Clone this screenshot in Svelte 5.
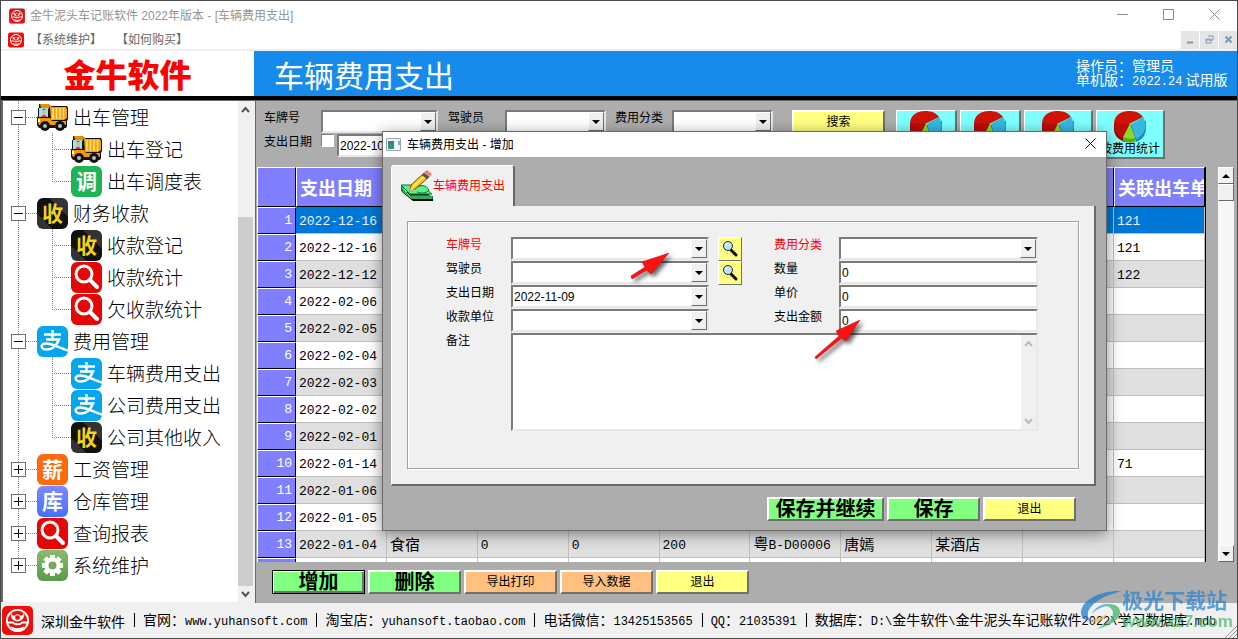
<script>
  const tree = [
    { label: '出车管理', icon: 'truck', children: [
      { label: '出车登记', icon: 'truck' },
      { label: '出车调度表', icon: 'tile', char: '调', tone: 'green' }
    ] },
    { label: '财务收款', icon: 'tile', char: '收', tone: 'black', children: [
      { label: '收款登记', icon: 'tile', char: '收', tone: 'black' },
      { label: '收款统计', icon: 'search' },
      { label: '欠收款统计', icon: 'search' }
    ] },
    { label: '费用管理', icon: 'pay', children: [
      { label: '车辆费用支出', icon: 'pay' },
      { label: '公司费用支出', icon: 'pay' },
      { label: '公司其他收入', icon: 'tile', char: '收', tone: 'black' }
    ] },
    { label: '工资管理', icon: 'tile', char: '薪', tone: 'orange' },
    { label: '仓库管理', icon: 'tile', char: '库', tone: 'violet' },
    { label: '查询报表', icon: 'search' },
    { label: '系统维护', icon: 'gear' }
  ];

  const row = (date, related = '') => [date, '', '', '', '', '', '', '', '', related];
  const rows = [
    row('2022-12-16', '121'),
    row('2022-12-16', '121'),
    row('2022-12-12', '122'),
    row('2022-02-06'),
    row('2022-02-05'),
    row('2022-02-04'),
    row('2022-02-03'),
    row('2022-02-02'),
    row('2022-02-01'),
    row('2022-01-14', '71'),
    row('2022-01-06'),
    row('2022-01-05'),
    ['2022-01-04', '食宿', '0', '0', '200', '粤B-D00006', '唐嫣', '某酒店', '', ''],
    row('')
  ];
  const headers = ['支出日期', '', '', '', '', '', '', '', '', '关联出车单'];

  const status = [
    '深圳金牛软件',
    '官网：www.yuhansoft.com',
    '淘宝店：yuhansoft.taobao.com',
    '电话微信：13425153565',
    'QQ：21035391',
    '数据库：D:\\金牛软件\\金牛泥头车记账软件2022\\学习数据库.mdb'
  ];

  // latin runs get the monospaced face, the rest stays in the CJK one
  const runs = (text) => text.match(/[\x21-\x7e]+|[^\x21-\x7e]+/g) ?? [];
  const isLatin = (text) => /^[\x21-\x7e]+$/.test(text);
</script>

{#snippet bull()}
  <svg class="bull" viewBox="0 0 32 30" aria-hidden="true">
    <rect width="32" height="30" rx="5" fill="#f50a0a" />
    <circle cx="16" cy="15" r="11" fill="none" stroke="#fff" stroke-width="2" />
    <path d="M9 6q-1 9 7 10q8-1 7-10q-1 4-4 4q-3-3-6 0q-3 0-4-4z" fill="#fff" />
    <circle cx="16" cy="12" r="2.5" fill="#f50a0a" />
    <path d="M6 17h5q5 4 10 0h5M9 22q7 4 14 0" fill="none" stroke="#fff" stroke-width="2" />
  </svg>
{/snippet}

{#snippet lens()}
  <svg viewBox="0 0 18 18" width="18" height="18" aria-hidden="true">
    <path d="M10 10l5 5" stroke="#111" stroke-width="3" stroke-linecap="round" />
    <circle cx="7" cy="6" r="4.5" fill="#bfe4f8" stroke="#223" stroke-width="1" />
    <path d="M4.500 6a2.500 2.500 0 0 1 2.500-2.500" stroke="#fff" fill="none" />
  </svg>
{/snippet}

{#snippet pie()}
  <svg viewBox="0 0 34 32" width="34" height="32" aria-hidden="true">
    <path d="M1 13v5c0 7 5 11 11 13l4-17z" fill="#970a06" />
    <path d="M17 14L33 10v7c0 7-4 12-10 14z" fill="#168db3" />
    <path d="M16 13L1 13C1 5 7 0 16 0c7 0 11 2 14 6z" fill="#d11206" />
    <path d="M1 12c0 7 4 13 8 15l8-14z" fill="#bd0d05" />
    <path d="M18 13L30 6c3 4 3 9 2 12-1 4-5 8-9 10z" fill="#38b8df" />
    <path d="M17 13l-7 14v3q6 3 12 1v-4z" fill="#54ad12" />
    <path d="M17 13l-7 13q6 3 12 1z" fill="#8ada24" />
  </svg>
{/snippet}

{#snippet treeIcon(node)}
  {#if node.icon === 'tile'}
    <span class="tile {node.tone}">{node.char}</span>
  {:else if node.icon === 'pay'}
    <span class="tile pay">
      <svg viewBox="0 0 31 31">
        <path d="M7 8.500h17M15.500 4v9M9 13.500h13c-2 5-6 10-12 10c-7 0-7-6-1-6c7 0 12 4 22 7" fill="none" stroke="#fff" stroke-width="2.500" />
      </svg>
    </span>
  {:else if node.icon === 'search'}
    <span class="tile red">
      <svg viewBox="0 0 31 31">
        <circle cx="13" cy="12" r="8" fill="none" stroke="#fff" stroke-width="3" />
        <path d="M19 18l7 7" stroke="#fff" stroke-width="4" stroke-linecap="round" />
      </svg>
    </span>
  {:else if node.icon === 'gear'}
    <span class="tile gear">
      <svg viewBox="0 0 31 31">
        <g stroke="#fff" stroke-width="5">
          <path d="M15.500 5v21M5 15.500h21M8 8l15 15M23 8L8 23" />
        </g>
        <circle cx="15.500" cy="15.500" r="8" fill="#fff" />
        <circle cx="15.500" cy="15.500" r="4" fill="#78a860" />
      </svg>
    </span>
  {:else}
    <svg class="truck" viewBox="0 0 31 31" aria-hidden="true">
      <path d="M2 2h9l3 2h16l1 2v11l-1 2v5l-1 2H2l-2-3v-7l1-2V6h1z" fill="#111" />
      <path d="M13 5h16l1 2v9l-3 2H14z" fill="#f6a400" />
      <path d="M16 6v11M19.500 6v11M23 6v11M26.500 6v11" stroke="#ffe08a" stroke-width="1.500" />
      <path d="M3 2h8l4 3h-3v2l-2-1H4z" fill="#e89000" />
      <path d="M2 6h9v9H2z" fill="#8feaf2" />
      <circle cx="7" cy="10" r="2" fill="#f0b080" />
      <path d="M5 8q2-3 4 0zM4 15q3-5 6 0z" fill="#e33" />
      <path d="M1 16h12l2 3h14v4H2l-1-2z" fill="#f39a00" />
      <rect x="1" y="17" width="2" height="3" fill="#fff" />
      <circle cx="8" cy="24" r="5" fill="#111" />
      <circle cx="23" cy="24" r="5" fill="#111" />
      <circle cx="8" cy="24" r="2" fill="#bbb" />
      <circle cx="23" cy="24" r="2" fill="#bbb" />
    </svg>
  {/if}
{/snippet}

{#snippet combo(id, value = '')}
  <span class="combo">
    <select {id}><option>{value}</option></select>
    <i class="drop"></i>
  </span>
{/snippet}

<div class="window">
  <header class="titlebar">
    {@render bull()}
    <span class="title">金牛泥头车记账软件 2022年版本 - [车辆费用支出]</span>
    <button aria-label="最小化"><svg width="11" height="11"><path d="M0 5.500h11" /></svg></button>
    <button aria-label="最大化"><svg width="11" height="11"><path d="M.5.5h10v10H.5z" /></svg></button>
    <button aria-label="关闭"><svg width="11" height="11"><path d="M.5.5l10 10M10.500.5l-10 10" /></svg></button>
  </header>

  <nav class="menubar">
    {@render bull()}
    <a href="#maintain">【系统维护】</a>
    <a href="#buy">【如何购买】</a>
    <div class="mdi">
      <button aria-label="最小化子窗口"><svg width="9" height="9"><path d="M1 7.500h6" stroke-width="2" /></svg></button>
      <button aria-label="还原子窗口"><svg width="9" height="9"><path d="M3 1h5v4H6M1 4h5v4H1zM1 5h5" /></svg></button>
      <button aria-label="关闭子窗口"><svg width="9" height="9"><path d="M1.500 1.500l6 6M7.500 1.500l-6 6" stroke-width="2" /></svg></button>
    </div>
  </nav>

  <div class="banner">
    <div class="logo">金牛软件</div>
    <h1>车辆费用支出</h1>
    <div class="operator">操作员：管理员<br />单机版：<span class="latin">2022.24</span> 试用版</div>
  </div>

  <main>
    <aside>
      <ul class="tree">
        {#each tree as node, i}
          {@const last = i === tree.length - 1}
          <li>
            <div class="node">
              <span class="gutter across" class:down={!last} class:end={last}>
                <button class="toggle" class:plus={!node.children} aria-label="展开或收起 {node.label}"></button>
              </span>
              {@render treeIcon(node)}
              <a href="#{node.label}">{node.label}</a>
            </div>
            {#if node.children}
              <ul>
                {#each node.children as child, j}
                  {@const tail = j === node.children.length - 1}
                  <li class="node">
                    <span class="gutter down"></span>
                    <span class="gutter across" class:down={!tail} class:end={tail}></span>
                    {@render treeIcon(child)}
                    <a href="#{child.label}">{child.label}</a>
                  </li>
                {/each}
              </ul>
            {/if}
          </li>
        {/each}
      </ul>
      <div class="slim-scroll">
        <svg viewBox="0 0 15 16"><path d="M4 11l3.500-4l3.500 4" /></svg>
        <div class="slim-thumb"></div>
        <svg viewBox="0 0 15 16"><path d="M4 6l3.500 4l3.500-4" /></svg>
      </div>
    </aside>

    <section class="content">
      <div class="filters">
        <div class="filter-fields">
          <div class="filter-row">
            <label for="f-plate">车牌号</label>
            {@render combo('f-plate')}
            <label for="f-driver">驾驶员</label>
            {@render combo('f-driver')}
            <label for="f-type">费用分类</label>
            {@render combo('f-type')}
          </div>
          <div class="filter-row">
            <label for="f-date-on">支出日期</label>
            <input id="f-date-on" type="checkbox" />
            <input class="date" type="text" value="2022-10-09" aria-label="起始日期" />
          </div>
        </div>
        <button class="btn yellow search">搜索</button>
        <div class="stats">
          <button class="btn" aria-label="按车牌统计">{@render pie()}</button>
          <button class="btn" aria-label="按月统计">{@render pie()}</button>
          <button class="btn wide" aria-label="按单位统计">{@render pie()}</button>
          <button class="btn wide">{@render pie()}<span>按费用统计</span></button>
        </div>
      </div>

      <div class="grid">
        <div class="grid-view">
          <table>
            <thead>
              <tr>
                <th class="num" aria-label="序号"></th>
                {#each headers as h}<th>{h}</th>{/each}
              </tr>
            </thead>
            <tbody>
              {#each rows as cells, i}
                <tr class:selected={i === 0}>
                  <th class="num">{cells[0] ? i + 1 : ''}</th>
                  {#each cells as cell}
                    <td>{#each runs(cell) as run}<span class:latin={isLatin(run)}>{run}</span>{/each}</td>
                  {/each}
                </tr>
              {/each}
            </tbody>
          </table>
        </div>
        <div class="scroll">
          <span class="scroll-btn up"></span>
          <span class="scroll-btn"></span>
          <span class="scroll-track"></span>
          <span class="scroll-btn down"></span>
        </div>
      </div>

      <div class="actions">
        <button class="btn green default">增加</button>
        <button class="btn green">删除</button>
        <button class="btn orange">导出打印</button>
        <button class="btn orange">导入数据</button>
        <button class="btn yellow">退出</button>
      </div>
    </section>
  </main>

  <footer>
    {@render bull()}
    {#each status as item}
      <span class="status">{#each runs(item) as run}<span class:latin={isLatin(run)}>{run}</span>{/each}</span>
    {/each}
    <svg class="grip" width="12" height="12"><path d="M0 12L12 0M4 12l8-8M8 12l4-4" /></svg>
  </footer>

  <div class="dialog" role="dialog" aria-label="车辆费用支出 - 增加">
    <div class="dialog-title">
      <svg width="15" height="13" viewBox="0 0 15 13">
        <path d="M.5.5h14v12H.5z" fill="#f4f4f4" stroke="#9aa6ae" />
        <path d="M2 3h6v8H2z" fill="#3c8f7c" />
        <path d="M2 3h6v3H2z" fill="#4178a8" />
        <path d="M12 3h2v4h-2z" fill="#7fb0d8" />
      </svg>
      <span>车辆费用支出 - 增加</span>
      <button aria-label="关闭对话框"><svg width="11" height="11"><path d="M.5.5l10 10M10.500.5l-10 10" /></svg></button>
    </div>

    <div class="dialog-body">
      <div class="tab">
        <svg width="32" height="32" viewBox="0 0 32 32">
          <path d="M1 22l11 9h20v-3l-8-7z" fill="#000" />
          <path d="M0 15l8 11h24v3H11L0 21z" fill="#0a7a34" />
          <path d="M0 15h20l11 9H9z" fill="#5cf08c" stroke="#0a7a34" />
          <path d="M1 18l8 8h22M2 21l8 7h21" stroke="#4de07e" fill="none" />
          <path d="M16 17q8-4 12 3q-4 5-12 2" fill="#5cf08c" stroke="#0a7a34" />
          <path d="M10 15L23 3l5 4L14 19l-5 2z" fill="#ffc400" stroke="#8a4b00" />
          <path d="M12 17L25 5" stroke="#ffe97a" stroke-width="2" />
          <path d="M22 4l5 4" stroke="#555" stroke-width="3" />
          <path d="M23 2l3-2l5 4l-2 3z" fill="#f08080" />
          <path d="M9 21l1-4l3 3z" fill="#f7d7a0" />
        </svg>
        <span>车辆费用支出</span>
      </div>
      <div class="tab-page">
        <form class="fields">
          <label class="required" for="plate">车牌号</label>
          {@render combo('plate')}
          <button type="button" class="btn yellow pick" aria-label="查找车牌号">{@render lens()}</button>
          <label class="required" for="type">费用分类</label>
          {@render combo('type')}

          <label for="driver">驾驶员</label>
          {@render combo('driver')}
          <button type="button" class="btn yellow pick" aria-label="查找驾驶员">{@render lens()}</button>
          <label for="qty">数量</label>
          <input id="qty" type="text" value="0" />

          <label for="date">支出日期</label>
          {@render combo('date', '2022-11-09')}
          <label class="right" for="price">单价</label>
          <input id="price" type="text" value="0" />

          <label for="payee">收款单位</label>
          {@render combo('payee')}
          <label class="right" for="amount">支出金额</label>
          <input id="amount" type="text" value="0" />

          <label for="memo">备注</label>
          <div class="memo">
            <textarea id="memo"></textarea>
            <div class="memo-scroll">
              <svg viewBox="0 0 15 16"><path d="M4 11l3.500-4l3.500 4" /></svg>
              <svg viewBox="0 0 15 16"><path d="M4 6l3.500 4l3.500-4" /></svg>
            </div>
          </div>
        </form>
      </div>
      <div class="dialog-actions">
        <button class="btn green save-next">保存并继续</button>
        <button class="btn green">保存</button>
        <button class="btn yellow">退出</button>
      </div>
    </div>

    <svg class="pointer first" width="50" height="36" viewBox="0 0 50 36">
      <path d="M5 30L4 27L18 18L15 13L42 4L24 25L20 21z" fill="#f11" stroke="#a01010" stroke-width=".5" />
    </svg>
    <svg class="pointer second" width="56" height="50" viewBox="0 0 56 50">
      <path d="M5 44L4 42L28 21L25 16L49 5L35 26L31 23z" fill="#f11" stroke="#a01010" stroke-width=".5" />
    </svg>
  </div>

  <div class="watermark">
    <svg width="42" height="40" viewBox="0 0 42 40">
      <path d="M42 1C22 0 2 9 1 22c0 6 4 9 9 8c-7-8 3-22 32-29z" fill="#1f7fc8" />
      <path d="M12 24c2-8 17-14 22-7c-6-3-17 1-22 7z" fill="#4a9edb" />
      <path d="M24 15c8-2 16 0 16 7c0 9-14 15-24 17c10-5 17-9 17-16c0-4-4-7-9-8z" fill="#3fb469" />
      <path d="M9 29c6 2 14-1 18-6c-2 8-13 12-18 6z" fill="#f1b63a" />
    </svg>
    <div>
      <strong>极光下载站</strong>
      <em>www.xz7.com</em>
    </div>
  </div>
</div>

<style>
  :global(body) {
    margin: 0;
    background: #4a4a4a;
  }

  .window {
    position: relative;
    display: flex;
    flex-direction: column;
    box-sizing: border-box;
    height: 100vh;
    border: 1px solid #4a4a4a;
    background: #fff;
    color: #000;
    font: 12px/16px "Liberation Sans", "Noto Sans CJK SC", sans-serif;
    overflow: hidden;
  }

  button, input, select, textarea {
    box-sizing: border-box;
    margin: 0;
    padding: 0;
    border: 0;
    border-radius: 0;
    background: none;
    color: inherit;
    font: inherit;
    appearance: none;
    outline: 0;
  }

  a {
    color: inherit;
    text-decoration: none;
  }

  ul {
    margin: 0;
    padding: 0;
    list-style: none;
  }

  .latin {
    font-family: "Liberation Mono", monospace;
  }

  .bull {
    flex: none;
    width: 16px;
    height: 16px;
  }

  /* title and menu */
  .titlebar {
    display: flex;
    align-items: center;
    height: 29px;
    padding-left: 8px;
    color: #959595;
  }

  .title {
    flex: 1;
    margin-left: 5px;
  }

  .titlebar button {
    width: 46px;
    height: 28px;
  }

  .titlebar svg, .dialog-title button svg {
    fill: none;
    stroke: #8a8a8a;
  }

  .menubar {
    display: flex;
    align-items: center;
    height: 19px;
    padding-left: 7px;
    border-bottom: 2px solid #f0f0f0;
    color: #666;
  }

  .menubar a {
    margin-left: 6px;
    margin-right: 8px;
  }

  .mdi {
    display: flex;
    gap: 1px;
    margin-left: auto;
  }

  .mdi button {
    width: 18px;
    height: 18px;
    background: #e5e5e5;
  }

  .mdi svg {
    fill: none;
    stroke: #8496ad;
  }

  /* banner */
  .banner {
    display: flex;
    align-items: center;
    height: 45px;
    border-bottom: 4px solid #000;
    background: #178bec;
    color: #fff;
    font-family: "Noto Sans CJK SC", sans-serif;
  }

  .logo {
    width: 253px;
    background: #fff;
    color: #f00;
    font-size: 32px;
    font-weight: 900;
    line-height: 45px;
    text-align: center;
  }

  h1 {
    flex: 1;
    margin: 0 0 0 20px;
    font-size: 30px;
    font-weight: 400;
    line-height: 44px;
  }

  .operator {
    width: 161px;
    font-size: 14px;
    line-height: 14px;
  }

  .operator .latin {
    font-size: 12px;
  }

  main {
    display: flex;
    flex: 1;
    min-height: 0;
    border-top: 1px solid #696969;
    background: #f0f0f0;
  }

  /* tree */
  aside {
    display: flex;
    width: 250px;
    margin: 0 2px 1px 0;
    border-left: 2px solid #696969;
    background: #fff;
  }

  .tree {
    flex: 1;
    overflow: hidden;
    font: 300 19px/32px "Noto Sans CJK SC", sans-serif;
  }

  .node {
    display: flex;
    align-items: center;
    height: 32px;
    white-space: nowrap;
  }

  .node a {
    margin-left: 5px;
  }

  .gutter {
    --dots-v: repeating-linear-gradient(to bottom, #808080 0 1px, transparent 1px 2px);
    --dots-h: repeating-linear-gradient(to right, #808080 0 1px, transparent 1px 2px);
    display: flex;
    align-items: center;
    flex: none;
    width: 34px;
    height: 32px;
    background-repeat: no-repeat;
  }

  .gutter.down {
    background-image: var(--dots-v);
    background-size: 1px 100%;
    background-position: 15px 0;
  }

  .gutter.across.down, .gutter.across.end {
    background-image: var(--dots-v), var(--dots-h);
    background-size: 1px 100%, 19px 1px;
    background-position: 15px 0, 15px 16px;
  }

  .gutter.across.end {
    background-size: 1px 16px, 19px 1px;
  }

  .toggle {
    width: 15px;
    height: 15px;
    margin-left: 8px;
    border: 1px solid #707070;
    background: linear-gradient(#000, #000) center / 9px 1px no-repeat, #fff;
  }

  .toggle.plus {
    background: linear-gradient(#000, #000) center / 9px 1px no-repeat, linear-gradient(#000, #000) center / 1px 9px no-repeat, #fff;
  }

  .tile, .truck {
    flex: none;
    width: 31px;
    height: 31px;
  }

  .tile {
    border-radius: 6px;
    color: #fff;
    font-size: 21px;
    font-weight: 700;
    line-height: 29px;
    text-align: center;
    overflow: hidden;
  }

  .tile svg {
    display: block;
  }

  .green.tile { background: #1eb453; }
  .black.tile { background: linear-gradient(225deg, #333 30%, #111 31% 75%, #333 76%); color: #f2d21b; }
  .orange.tile { background: #ff6a0c; }
  .violet.tile { background: linear-gradient(#8088ff, #4470fb); }
  .pay { background: #06a6ee; }
  .red { background: #e60606; }
  .gear { background: linear-gradient(#8aba70, #5b9a49); }

  .slim-scroll {
    display: flex;
    flex-direction: column;
    width: 15px;
    background: #f0f0f0;
  }

  .slim-scroll svg, .memo-scroll svg {
    width: 15px;
    height: 16px;
    fill: none;
    stroke: #555;
    stroke-width: 2;
  }

  .slim-thumb {
    flex: 1;
    margin-top: 100px;
    background: #cdcdcd;
  }

  /* content */
  .content {
    display: flex;
    flex: 1;
    flex-direction: column;
    min-width: 0;
    padding: 0 2px 0 1px;
    border-left: 1px solid #696969;
    background: #adadad;
  }

  .filters {
    display: flex;
    align-items: flex-start;
    height: 57px;
    padding: 9px 0 0 7px;
  }

  .filter-row {
    display: flex;
    align-items: flex-start;
    height: 24px;
  }

  .filter-row label {
    width: 57px;
  }

  .filter-row .combo {
    width: 101px;
    height: 23px;
    margin-right: 9px;
  }

  .filter-row .combo:nth-child(2) {
    width: 117px;
    margin-right: 10px;
  }

  .filter-row .combo:last-child {
    margin-right: 0;
  }

  input[type="checkbox"] {
    width: 13px;
    height: 13px;
    border: 1px solid;
    border-color: #808080 #fff #fff #808080;
    background: #fff;
  }

  input[type="text"], .combo, .memo {
    box-sizing: border-box;
    border: 2px solid;
    border-color: #7a7a7a #e8e8e8 #e8e8e8 #7a7a7a;
    background: #fff;
  }

  input[type="text"] {
    min-width: 0;
    padding-left: 1px;
  }

  .date {
    width: 101px;
    height: 23px;
    margin-left: 3px;
  }

  .combo {
    display: flex;
  }

  .combo select {
    flex: 1;
    min-width: 0;
    padding-left: 1px;
  }

  .drop {
    display: flex;
    align-items: center;
    justify-content: center;
    box-sizing: border-box;
    width: 16px;
    border: 1px solid;
    border-color: #fff #707070 #707070 #fff;
    background: #f0f0f0;
    pointer-events: none;
  }

  .drop::after, .scroll-btn.down::after {
    content: "";
    border: 4px solid transparent;
    border-top-color: #000;
    border-bottom: 0;
  }

  .btn {
    width: 93px;
    height: 24px;
    border: 2px solid;
    border-color: #fff #707070 #707070 #fff;
    line-height: 20px;
    white-space: nowrap;
  }

  .btn.yellow { background: #ffff80; }
  .btn.orange { background: #ffc080; }

  .btn.green {
    background: #80ff80;
    font-size: 20px;
    font-weight: 700;
  }

  .btn.default {
    border: 1px solid #000;
    box-shadow: inset 1px 1px #fff, inset -2px -2px #707070;
  }

  .search {
    margin-left: 19px;
  }

  .stats {
    display: flex;
    gap: 3px;
    margin-left: 11px;
  }

  .stats .btn {
    display: flex;
    flex-direction: column;
    align-items: center;
    width: 61px;
    height: 49px;
    border-width: 1px 2px 2px 1px;
    background: #80ffff;
    line-height: 13px;
  }

  .stats .wide {
    width: 69px;
  }

  .stats svg {
    flex: none;
  }

  /* data grid */
  .grid {
    display: flex;
    flex: 1;
    gap: 12px;
    min-height: 0;
    padding-right: 1px;
  }

  .grid-view {
    flex: 1;
    min-width: 0;
    overflow: hidden;
  }

  table {
    width: 100%;
    border-spacing: 0;
    border-right: 1px solid #000;
    table-layout: fixed;
    font: 15px/20px "Noto Sans CJK SC", sans-serif;
  }

  th, td {
    box-sizing: border-box;
    height: 27px;
    padding: 0 0 0 3px;
    overflow: hidden;
    text-align: left;
    white-space: nowrap;
  }

  th {
    border: 1px solid;
    border-color: #fff #000 #000 #fff;
    background: #8080ff;
    color: #fff;
    font-size: 18px;
  }

  thead th {
    height: 40px;
  }

  .num {
    width: 39px;
    padding: 0 3px 0 0;
    font: 13px/20px "Liberation Mono", monospace;
    text-align: right;
  }

  td {
    border-right: 1px solid #c0c0c0;
    border-bottom: 1px solid #c0c0c0;
    background: #dfdfdf;
  }

  tr:nth-child(even) td {
    background: #fff;
  }

  tr.selected td {
    background: #0078d7;
    color: #e8f2fb;
  }

  td .latin {
    font-size: 13px;
  }

  .scroll {
    display: flex;
    flex-direction: column;
    width: 16px;
  }

  .scroll-btn {
    display: flex;
    align-items: center;
    justify-content: center;
    box-sizing: border-box;
    height: 17px;
    border: 1px solid;
    border-color: #fff #696969 #696969 #fff;
    background: #f0f0f0;
  }

  .scroll-btn.up::after {
    content: "";
    border: 4px solid transparent;
    border-top: 0;
    border-bottom-color: #000;
  }

  .scroll-track {
    flex: 1;
    background: #f7f7f7;
  }

  .actions {
    display: flex;
    gap: 3px;
    padding: 8px 0 9px 15px;
  }

  /* status bar */
  footer {
    display: flex;
    align-items: center;
    height: 35px;
    padding-left: 1px;
    background: #f0f0f0;
    font: 14px/20px "Noto Sans CJK SC", sans-serif;
    white-space: nowrap;
  }

  footer .bull {
    width: 31px;
    height: 29px;
    margin-right: 8px;
  }

  .status .latin {
    font-size: 12px;
  }

  .status + .status::before {
    content: "";
    display: inline-block;
    width: 1px;
    height: 14px;
    margin: 0 8px 0 9px;
    background: #000;
    vertical-align: -2px;
  }

  .grip {
    align-self: flex-end;
    flex: none;
    margin-left: auto;
    stroke: #999;
  }

  /* dialog */
  .dialog {
    position: absolute;
    top: 130px;
    left: 381px;
    box-sizing: border-box;
    width: 725px;
    border: 1px solid #6a6a6a;
    background: #adadad;
    box-shadow: 0 3px 14px rgba(0, 0, 0, 0.45);
  }

  .dialog-title {
    display: flex;
    align-items: center;
    height: 25px;
    padding-left: 3px;
    background: #fff;
  }

  .dialog-title span {
    flex: 1;
    margin-left: 6px;
  }

  .dialog-title button {
    width: 32px;
    height: 25px;
  }

  .dialog-title button svg {
    stroke: #111;
  }

  .dialog-body {
    padding: 8px 10px 9px 8px;
  }

  .tab {
    display: flex;
    align-items: center;
    box-sizing: border-box;
    width: 124px;
    height: 41px;
    padding-left: 9px;
    border: 1px solid #fff;
    border-right: 2px solid #696969;
    border-bottom: 0;
    border-radius: 3px 3px 0 0;
    background: #f0f0f0;
    color: #f00;
  }

  .tab-page {
    padding: 15px;
    border: 1px solid #fff;
    border-top: 0;
    border-right: 2px solid #696969;
    border-bottom: 2px solid #696969;
    background: #f0f0f0;
  }

  .fields {
    display: grid;
    grid-template-columns: 65px 198px 65px 65px 1fr;
    grid-template-rows: repeat(4, 24px) 98px;
    padding: 15px 40px 37px 38px;
    border: 1px solid #a0a0a0;
    box-shadow: inset 1px 1px #fff, 1px 1px #fff;
  }

  .fields .combo, .fields input {
    height: 23px;
  }

  .fields .right {
    grid-column: 4;
  }

  .required {
    color: #f00;
  }

  .fields .pick {
    display: flex;
    align-items: center;
    justify-content: center;
    width: 24px;
    margin-left: 9px;
    border-width: 1px;
  }

  .memo {
    display: flex;
    grid-column: 2 / -1;
  }

  .memo textarea {
    flex: 1;
    resize: none;
  }

  .memo-scroll {
    display: flex;
    flex-direction: column;
    justify-content: space-between;
    background: #f0f0f0;
  }

  .memo-scroll svg {
    stroke: #bbb;
  }

  .dialog-actions {
    display: flex;
    justify-content: flex-end;
    gap: 3px;
    padding: 11px 20px 0 0;
  }

  .save-next {
    width: 117px;
  }

  .pointer {
    position: absolute;
    filter: drop-shadow(3px 3px 2px rgba(0, 0, 0, 0.6));
    pointer-events: none;
  }

  .first {
    top: 117px;
    left: 244px;
  }

  .second {
    top: 183px;
    left: 428px;
  }

  .watermark {
    position: absolute;
    right: 4px;
    bottom: 6px;
    display: flex;
    opacity: 0.75;
    pointer-events: none;
  }

  .watermark strong, .watermark em {
    display: block;
    font-style: normal;
    font-weight: 700;
  }

  .watermark strong {
    color: #2f86cf;
    font-size: 21px;
    line-height: 22px;
  }

  .watermark em {
    color: #4cba6c;
    font-size: 17px;
    line-height: 20px;
  }
</style>
